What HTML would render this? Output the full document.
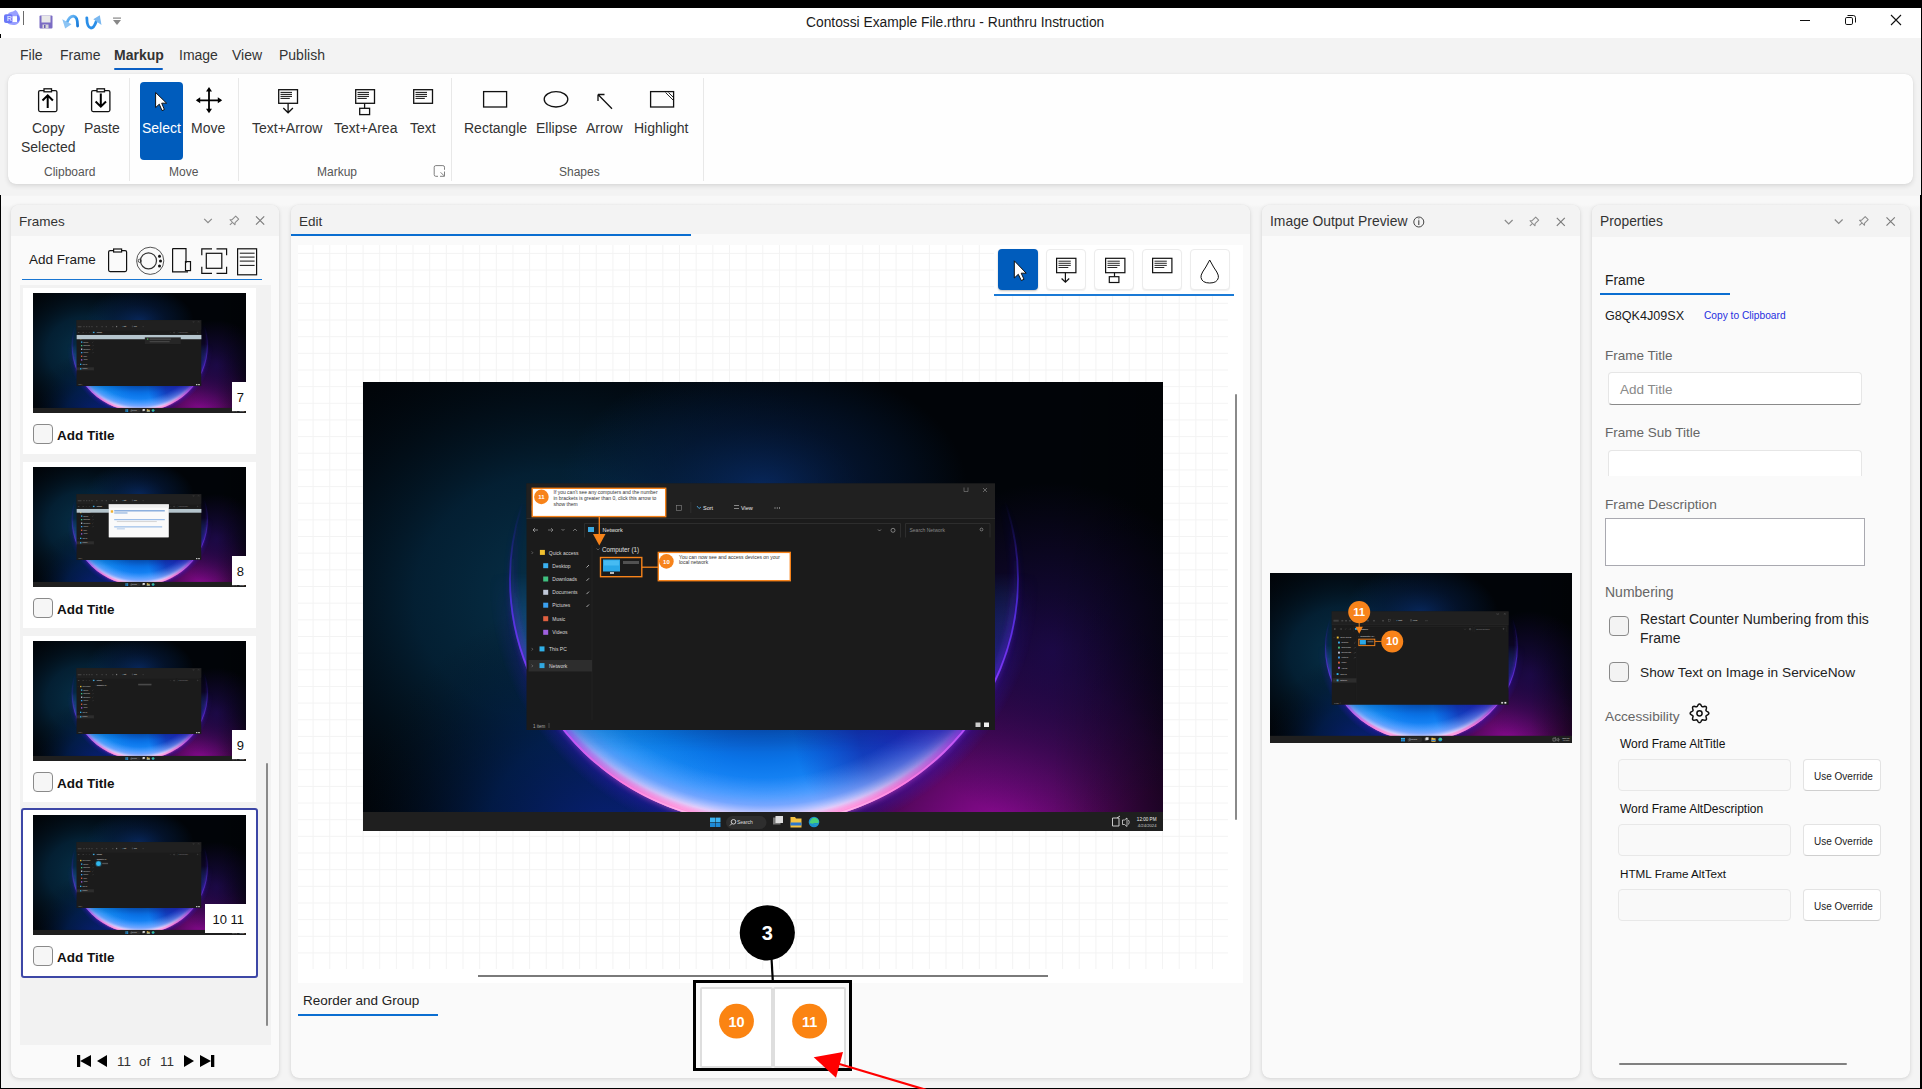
<!DOCTYPE html>
<html><head><meta charset="utf-8">
<style>
*{box-sizing:border-box;margin:0;padding:0}
html,body{width:1922px;height:1089px;overflow:hidden;background:#f3f3f3;font-family:"Liberation Sans",sans-serif;color:#1a1a1a}
.a{position:absolute}
.t{position:absolute;white-space:nowrap;line-height:1}
.panel{position:absolute;background:#fafafa;border-radius:8px;box-shadow:0 1px 4px rgba(0,0,0,.13),0 0 1px rgba(0,0,0,.1);overflow:hidden}
.ph{position:absolute;left:0;top:0;right:0;height:31px;background:#f3f3f3}
</style></head><body>
<svg width="0" height="0" style="position:absolute">
<defs>
<radialGradient id="gTeal" gradientUnits="userSpaceOnUse" cx="200" cy="215" r="330" gradientTransform="translate(200 215) scale(1 0.85) translate(-200 -215)">
  <stop offset="0" stop-color="#07324a"/><stop offset="0.45" stop-color="#04243a" stop-opacity="0.85"/><stop offset="1" stop-color="#020c16" stop-opacity="0"/></radialGradient>
 <radialGradient id="gTopBlue" gradientUnits="userSpaceOnUse" cx="400" cy="105" r="170" gradientTransform="translate(400 105) scale(1.2 0.75) translate(-400 -105)">
  <stop offset="0" stop-color="#0a3278" stop-opacity="0.7"/><stop offset="0.5" stop-color="#062250" stop-opacity="0.45"/><stop offset="1" stop-color="#052a5a" stop-opacity="0"/></radialGradient>
 <radialGradient id="gMag" gradientUnits="userSpaceOnUse" cx="630" cy="455" r="290" gradientTransform="translate(630 455) scale(1 0.9) translate(-630 -455)">
  <stop offset="0" stop-color="#900a98"/><stop offset="0.3" stop-color="#600868" stop-opacity="0.95"/><stop offset="0.65" stop-color="#2c0438" stop-opacity="0.7"/><stop offset="1" stop-color="#000" stop-opacity="0"/></radialGradient>
 <linearGradient id="gVig" gradientUnits="userSpaceOnUse" x1="690" y1="0" x2="800" y2="0">
  <stop offset="0" stop-color="#000" stop-opacity="0"/><stop offset="1" stop-color="#000" stop-opacity="0.25"/></linearGradient>
 <radialGradient id="gViolet" gradientUnits="userSpaceOnUse" cx="690" cy="270" r="170">
  <stop offset="0" stop-color="#1e0a50" stop-opacity="0.8"/><stop offset="1" stop-color="#1e0a50" stop-opacity="0"/></radialGradient>
 <radialGradient id="gNavy" gradientUnits="userSpaceOnUse" cx="250" cy="470" r="260">
  <stop offset="0" stop-color="#0a2080"/><stop offset="0.5" stop-color="#02205a" stop-opacity="0.7"/><stop offset="1" stop-color="#001020" stop-opacity="0"/></radialGradient>
 <linearGradient id="gMaskL" gradientUnits="userSpaceOnUse" x1="0" y1="190" x2="0" y2="370">
  <stop offset="0" stop-color="#fff" stop-opacity="0"/><stop offset="1" stop-color="#fff"/></linearGradient>
 <mask id="mLow" maskUnits="userSpaceOnUse" x="0" y="0" width="800" height="449"><rect width="800" height="449" fill="url(#gMaskL)"/></mask>
 <radialGradient id="gOuterGlow" gradientUnits="userSpaceOnUse" cx="401" cy="197" r="275" gradientTransform="translate(401 197) scale(1 0.967) translate(-401 -197)">
  <stop offset="0.88" stop-color="#2010b0" stop-opacity="0"/><stop offset="0.93" stop-color="#3018c0" stop-opacity="0.45"/><stop offset="1" stop-color="#3018c0" stop-opacity="0"/></radialGradient>
 <radialGradient id="gDisc" gradientUnits="userSpaceOnUse" cx="401" cy="197" r="255" fx="401" fy="40" gradientTransform="translate(401 197) scale(1 0.965) translate(-401 -197)">
  <stop offset="0" stop-color="#020a18" stop-opacity="0"/><stop offset="0.5" stop-color="#032050" stop-opacity="0.35"/><stop offset="0.7" stop-color="#0540a8"/><stop offset="0.84" stop-color="#0a74e8"/><stop offset="0.93" stop-color="#2090ff"/><stop offset="0.98" stop-color="#4a88ff"/><stop offset="1" stop-color="#6a50ff"/></radialGradient>
 <radialGradient id="gBand" gradientUnits="userSpaceOnUse" cx="401" cy="197" r="255" fx="401" fy="40" gradientTransform="translate(401 197) scale(1 0.965) translate(-401 -197)">
  <stop offset="0.88" stop-color="#80a8ff" stop-opacity="0"/><stop offset="0.95" stop-color="#90b0ff" stop-opacity="0.75"/><stop offset="0.978" stop-color="#e0d8ff"/><stop offset="0.992" stop-color="#ffc0ec"/><stop offset="1" stop-color="#ff70d0"/></radialGradient>
 <linearGradient id="gMaskB" gradientUnits="userSpaceOnUse" x1="0" y1="320" x2="0" y2="425">
  <stop offset="0" stop-color="#fff" stop-opacity="0"/><stop offset="1" stop-color="#fff"/></linearGradient>
 <mask id="mBot" maskUnits="userSpaceOnUse" x="0" y="0" width="800" height="449"><rect width="800" height="449" fill="url(#gMaskB)"/></mask>
 <radialGradient id="gDiscL" gradientUnits="userSpaceOnUse" cx="200" cy="330" r="170">
  <stop offset="0" stop-color="#0a9ad0" stop-opacity="0.35"/><stop offset="1" stop-color="#0a9ad0" stop-opacity="0"/></radialGradient>
 <radialGradient id="gDiscR" gradientUnits="userSpaceOnUse" cx="590" cy="340" r="160">
  <stop offset="0" stop-color="#1a08b0" stop-opacity="0.9"/><stop offset="0.6" stop-color="#120890" stop-opacity="0.55"/><stop offset="1" stop-color="#1010a0" stop-opacity="0"/></radialGradient>
 <linearGradient id="gRim" gradientUnits="userSpaceOnUse" x1="0" y1="120" x2="0" y2="449">
  <stop offset="0" stop-color="#2010a0" stop-opacity="0"/><stop offset="0.3" stop-color="#4020d0" stop-opacity="0.45"/><stop offset="0.65" stop-color="#8030ff" stop-opacity="0.8"/><stop offset="0.87" stop-color="#ff50c8"/><stop offset="1" stop-color="#ff90d8"/></linearGradient>
 <linearGradient id="gRim2" gradientUnits="userSpaceOnUse" x1="0" y1="120" x2="0" y2="449">
  <stop offset="0" stop-color="#3020c0" stop-opacity="0"/><stop offset="0.3" stop-color="#5a30ff" stop-opacity="0.7"/><stop offset="0.65" stop-color="#a040ff"/><stop offset="0.86" stop-color="#ff80e0"/><stop offset="1" stop-color="#ffd8f0"/></linearGradient>
 <filter id="fb3" x="-10%" y="-10%" width="120%" height="120%"><feGaussianBlur stdDeviation="3"/></filter>
<symbol id="bloom" viewBox="0 0 800 449">
 <rect width="800" height="449" fill="#010408"/>
 <rect width="800" height="449" fill="url(#gTeal)"/>
 <rect width="800" height="449" fill="url(#gMag)"/>
 <rect width="800" height="449" fill="url(#gNavy)"/>
 <rect width="800" height="449" fill="url(#gViolet)"/>
 <rect width="800" height="449" fill="url(#gVig)"/>
 <rect width="800" height="449" fill="url(#gTopBlue)"/>
 <g mask="url(#mLow)">
  <ellipse cx="401" cy="197" rx="275" ry="266" fill="url(#gOuterGlow)"/>
  <ellipse cx="401" cy="197" rx="255" ry="246" fill="url(#gDisc)"/>
  <ellipse cx="401" cy="197" rx="255" ry="246" fill="url(#gDiscL)"/>
  <ellipse cx="401" cy="197" rx="255" ry="246" fill="url(#gDiscR)"/>
  <ellipse cx="401" cy="197" rx="255" ry="246" fill="url(#gBand)" mask="url(#mBot)"/>
 </g>
 <ellipse cx="401" cy="197" rx="252" ry="243" fill="none" stroke="url(#gRim)" stroke-width="5" filter="url(#fb3)" opacity="0.8"/>
 <ellipse cx="401" cy="197" rx="254" ry="245" fill="none" stroke="url(#gRim2)" stroke-width="1.8"/>
 <rect y="430" width="800" height="19" fill="#1f1f1f"/>
 <rect x="347" y="435.6" width="5" height="4.4" fill="#3bb4f2"/><rect x="352.5" y="435.6" width="5" height="4.4" fill="#3bb4f2"/>
 <rect x="347" y="440.5" width="5" height="4.5" fill="#1e8ad6"/><rect x="352.5" y="440.5" width="5" height="4.5" fill="#1e8ad6"/>
 <rect x="363" y="434" width="40.5" height="13" rx="6.5" fill="#2e2e2e"/>
 <circle cx="370.5" cy="439.8" r="2.3" fill="none" stroke="#ddd" stroke-width="0.9"/>
 <path d="M369 441.5 L367 443.5" stroke="#ddd" stroke-width="0.9"/>
 <text x="374" y="442" font-size="5" fill="#ddd" font-family="Liberation Sans">Search</text>
 <rect x="410" y="435.5" width="7.5" height="7" fill="#777"/><rect x="412.5" y="434" width="7.5" height="7" fill="#ddd"/>
 <path d="M427.5 435 H432 L433 436.5 H438.5 V445.5 H427.5Z" fill="#f5c242"/>
 <rect x="427.5" y="440.5" width="11" height="3" fill="#2a77d0"/>
 <circle cx="451" cy="440" r="5.3" fill="#1a8fd0"/><path d="M446.5 441 Q448 435 453 436 Q456.5 437.5 455.5 441 L450 441 Q451 443.5 455 443" fill="#49d07a" stroke="none"/>
 <path d="M749.5 436 H756 V444 H749.5Z M754 436 L757 434" fill="none" stroke="#ddd" stroke-width="0.9"/>
 <path d="M759.5 438 H761.5 L764 436 V444.5 L761.5 442.5 H759.5Z M765.5 438 Q767 440 765.5 442.5" fill="none" stroke="#ddd" stroke-width="0.8"/>
 <text x="793.5" y="439" font-size="4.6" fill="#eee" text-anchor="end" font-family="Liberation Sans">12:00 PM</text>
 <text x="793.5" y="444.5" font-size="4.2" fill="#ccc" text-anchor="end" font-family="Liberation Sans">4/24/2024</text>
</symbol>
<symbol id="explorer" viewBox="0 0 800 449"><g font-family="Liberation Sans">
<rect x="163.5" y="101.5" width="468.5" height="246.5" fill="#1b1b1b"/>
<rect x="163.5" y="101.5" width="468.5" height="35" fill="#202020"/>
<rect x="163.5" y="136" width="468.5" height="0.8" fill="#333"/>
<path d="M601 105.5 V109.5 H605 V105.5" fill="none" stroke="#999" stroke-width="0.5"/>
<path d="M620 106 L624 110 M624 106 L620 110" stroke="#aaa" stroke-width="0.5"/>
<rect x="168" y="123.5" width="14" height="5" fill="#777" opacity="0.35"/>
<rect x="189" y="124" width="5" height="4" fill="#888" opacity="0.35"/>
<rect x="199" y="124" width="5" height="4" fill="#888" opacity="0.35"/>
<rect x="209" y="124" width="5" height="4" fill="#888" opacity="0.35"/>
<rect x="219" y="124" width="5" height="4" fill="#888" opacity="0.35"/>
<rect x="237" y="124" width="5" height="4" fill="#888" opacity="0.35"/>
<rect x="257" y="124" width="5" height="4" fill="#888" opacity="0.35"/>
<rect x="273" y="124" width="5" height="4" fill="#888" opacity="0.35"/>
<rect x="297" y="124" width="5" height="4" fill="#888" opacity="0.35"/>
<rect x="313.5" y="123.5" width="5" height="5" fill="none" stroke="#888" stroke-width="0.6"/>
<path d="M327.8 120 V131" stroke="#3a3a3a" stroke-width="0.6"/>
<path d="M334 124 L336 126.5 L338 125" stroke="#4ab0ee" stroke-width="0.8" fill="none"/>
<text x="340" y="128" font-size="5.5" fill="#e8e8e8" text-anchor="start" font-weight="normal">Sort</text>
<path d="M371 123.5 H376 M371 126.5 H376" stroke="#ccc" stroke-width="0.6"/>
<text x="378" y="128" font-size="5.5" fill="#e8e8e8" text-anchor="start" font-weight="normal">View</text>
<path d="M411.5 126 H412.5 M413.8 126 H414.8 M416 126 H417" stroke="#ddd" stroke-width="0.9"/>
<path d="M221.5 155.5 V141.5 H537.5 V155.5" fill="none" stroke="#3a3a3a" stroke-width="0.6"/>
<path d="M542.5 155.5 V141.5 H627 V155.5" fill="none" stroke="#3a3a3a" stroke-width="0.6"/>
<path d="M170 148 H175 M170 148 L172 146 M170 148 L172 150" stroke="#ccc" stroke-width="0.6" fill="none"/>
<path d="M185 148 H190 M190 148 L188 146 M190 148 L188 150" stroke="#aaa" stroke-width="0.6" fill="none"/>
<path d="M198.5 147 L200 148.5 L201.5 147 M210 149 L212 147 L214 149" stroke="#aaa" stroke-width="0.6" fill="none"/>
<rect x="225" y="145" width="6" height="5" fill="#3aa8e0"/>
<text x="239.5" y="150" font-size="5.5" fill="#e8e8e8" text-anchor="start" font-weight="normal">Network</text>
<path d="M515 147.5 L516.5 149 L518 147.5" stroke="#aaa" stroke-width="0.6" fill="none"/>
<circle cx="530" cy="148.3" r="2" fill="none" stroke="#bbb" stroke-width="0.6"/>
<text x="546.5" y="150" font-size="5" fill="#888" text-anchor="start" font-weight="normal">Search Network</text>
<circle cx="618.5" cy="147.5" r="1.4" fill="none" stroke="#aaa" stroke-width="0.6"/>
<path d="M229 163 V338" stroke="#262626" stroke-width="0.7"/>
<rect x="165.5" y="278" width="63.5" height="11.5" fill="#2d2d2d"/>
<rect x="176.9" y="167.89999999999998" width="5" height="5" fill="#f0c030"/>
<text x="185.8" y="172.5" font-size="5" fill="#d8d8d8" text-anchor="start" font-weight="normal">Quick access</text>
<path d="M168.6 169.39999999999998 L169.8 170.7 L168.6 172.0" stroke="#999" stroke-width="0.5" fill="none"/>
<rect x="180.2" y="181.2" width="5" height="5" fill="#3ab0f0"/>
<text x="189.3" y="185.8" font-size="5" fill="#d8d8d8" text-anchor="start" font-weight="normal">Desktop</text>
<rect x="180.2" y="194.5" width="5" height="5" fill="#40c080"/>
<text x="189.3" y="199.10000000000002" font-size="5" fill="#d8d8d8" text-anchor="start" font-weight="normal">Downloads</text>
<rect x="180.2" y="207.79999999999998" width="5" height="5" fill="#c0c8d8"/>
<text x="189.3" y="212.4" font-size="5" fill="#d8d8d8" text-anchor="start" font-weight="normal">Documents</text>
<rect x="180.2" y="220.7" width="5" height="5" fill="#3aa0f0"/>
<text x="189.3" y="225.3" font-size="5" fill="#d8d8d8" text-anchor="start" font-weight="normal">Pictures</text>
<rect x="180.2" y="234.2" width="5" height="5" fill="#e06040"/>
<text x="189.3" y="238.8" font-size="5" fill="#d8d8d8" text-anchor="start" font-weight="normal">Music</text>
<rect x="180.2" y="247.79999999999998" width="5" height="5" fill="#a060e0"/>
<text x="189.3" y="252.4" font-size="5" fill="#d8d8d8" text-anchor="start" font-weight="normal">Videos</text>
<rect x="176.5" y="264.4" width="5" height="5" fill="#30b0e8"/>
<text x="186" y="269.0" font-size="5" fill="#d8d8d8" text-anchor="start" font-weight="normal">This PC</text>
<path d="M168.6 265.9 L169.8 267.2 L168.6 268.5" stroke="#999" stroke-width="0.5" fill="none"/>
<rect x="176.5" y="281.09999999999997" width="5" height="5" fill="#30a8e0"/>
<text x="186" y="285.7" font-size="5" fill="#d8d8d8" text-anchor="start" font-weight="normal">Network</text>
<path d="M168.6 282.59999999999997 L169.8 283.9 L168.6 285.2" stroke="#999" stroke-width="0.5" fill="none"/>
<path d="M223.5 185.5 L226 183" stroke="#bbb" stroke-width="0.9"/>
<path d="M223.5 198.8 L226 196.3" stroke="#bbb" stroke-width="0.9"/>
<path d="M223.5 212.1 L226 209.6" stroke="#bbb" stroke-width="0.9"/>
<path d="M223.5 225.0 L226 222.5" stroke="#bbb" stroke-width="0.9"/>
<path d="M233.5 166.5 L235 168 L236.5 166.5" stroke="#999" stroke-width="0.5" fill="none"/>
<text x="239" y="170" font-size="6.3" fill="#e0e0e0" text-anchor="start" font-weight="normal">Computer (1)</text>
<text x="170" y="345.5" font-size="4.5" fill="#aaa" text-anchor="start" font-weight="normal">1 item</text>
<path d="M186 341 V346" stroke="#777" stroke-width="0.5"/>
<rect x="612.5" y="340.5" width="5" height="4.5" fill="#ccc"/><rect x="621" y="340.5" width="5" height="4.5" fill="#eee"/>
</g></symbol>
<symbol id="wp0" viewBox="0 0 800 449"><use href="#bloom"/><use href="#explorer"/><rect x="164" y="157" width="468.5" height="16" fill="#b4c4cc"/>
<rect x="420" y="166" width="135" height="25" fill="#262626"/>
<rect x="428" y="170" width="5" height="5" fill="#50b050"/>
<rect x="438" y="171" width="80" height="3" fill="#888" opacity="0.6"/>
<rect x="438" y="181" width="75" height="3" fill="#888" opacity="0.5"/></symbol>
<symbol id="wp1" viewBox="0 0 800 449"><use href="#bloom"/><use href="#explorer"/><rect x="164" y="157" width="468.5" height="14" fill="#b4c4cc"/>
<rect x="285" y="140" width="225" height="123" fill="#fafafa" stroke="#ccc" stroke-width="1"/>
<rect x="285" y="140" width="225" height="12" fill="#eee"/>
<rect x="292" y="162" width="9" height="9" fill="#f0b030"/>
<rect x="305" y="162" width="190" height="4" fill="#3a78c8" opacity="0.8"/>
<rect x="305" y="170" width="50" height="4" fill="#3a78c8" opacity="0.6"/>
<rect x="305" y="195" width="190" height="4" fill="#4a88d8" opacity="0.6"/>
<rect x="315" y="203" width="150" height="3" fill="#888" opacity="0.4"/>
<rect x="305" y="222" width="180" height="4" fill="#4a88d8" opacity="0.6"/>
<rect x="315" y="230" width="30" height="3" fill="#4a88d8" opacity="0.5"/></symbol>
<symbol id="wp2" viewBox="0 0 800 449"><use href="#bloom"/><use href="#explorer"/><rect x="395" y="160" width="50" height="6" fill="#777" opacity="0.5"/></symbol>
<symbol id="wp3" viewBox="0 0 800 449"><use href="#bloom"/><use href="#explorer"/><circle cx="246" cy="182" r="9" fill="#30b8f0"/><circle cx="246" cy="182" r="12" fill="#30b8f0" opacity="0.3"/>
<rect x="260" y="179" width="22" height="5" fill="#888" opacity="0.5"/></symbol>
<symbol id="wpp" viewBox="0 0 800 449"><use href="#bloom"/><use href="#explorer"/><rect x="238" y="177" width="16" height="12" fill="#2aa8e8"/><rect x="258" y="179" width="16" height="4" fill="#777" opacity="0.7"/>
<rect x="235.3" y="174.8" width="42.3" height="17" fill="none" stroke="#f7831a" stroke-width="2.5"/>
<path d="M277.6 180.7 H296" stroke="#f7831a" stroke-width="2.5"/>
<path d="M236.3 130 V146" stroke="#f7831a" stroke-width="2.5"/>
<path d="M226.6 141.7 H246 L236.3 160.3Z" fill="#f7831a"/>
<circle cx="236.3" cy="103.3" r="29.1" fill="#f7831a"/>
<text x="236.3" y="114" text-anchor="middle" font-family="Liberation Sans" font-weight="bold" font-size="30" fill="#fff">11</text>
<circle cx="323.8" cy="180.7" r="29.1" fill="#f7831a"/>
<text x="323.8" y="191.4" text-anchor="middle" font-family="Liberation Sans" font-weight="bold" font-size="30" fill="#fff">10</text></symbol>
<symbol id="wpm" viewBox="0 0 800 449"><use href="#bloom"/><use href="#explorer"/><g font-family="Liberation Sans">
<rect x="240" y="177.5" width="17" height="12" fill="#2aa8e8"/>
<rect x="241" y="178.5" width="15" height="5" fill="#5cc8f8" opacity="0.6"/>
<rect x="247" y="190" width="4" height="2" fill="#bbb"/>
<rect x="260" y="179" width="16" height="3" fill="#777" opacity="0.6"/>
<rect x="237.5" y="175.5" width="41.3" height="19.2" fill="none" stroke="#f7831a" stroke-width="1.4"/>
<path d="M278.8 185.2 H295.5" stroke="#f7831a" stroke-width="1.3"/>
<rect x="295.3" y="170.4" width="132" height="28.3" fill="#fff" stroke="#f7831a" stroke-width="1.4"/>
<circle cx="303.4" cy="179.4" r="7.3" fill="#f7831a"/>
<text x="303.4" y="181.6" font-size="6" fill="#fff" text-anchor="middle" font-weight="bold">10</text>
<text x="316" y="177" font-size="5" fill="#333" text-anchor="start" font-weight="normal">You can now see and access devices on your</text>
<text x="316" y="182.2" font-size="5" fill="#333" text-anchor="start" font-weight="normal">local network</text>
<rect x="169.2" y="106.3" width="133.5" height="28.3" fill="#fff" stroke="#f7831a" stroke-width="1.4"/>
<circle cx="178.4" cy="114.9" r="7.3" fill="#f7831a"/>
<text x="178.4" y="117.1" font-size="6" fill="#fff" text-anchor="middle" font-weight="bold">11</text>
<text x="190.5" y="112.2" font-size="5" fill="#333" text-anchor="start" font-weight="normal">If you can't see any computers and the number</text>
<text x="190.5" y="118.3" font-size="5" fill="#333" text-anchor="start" font-weight="normal">in brackets is greater than 0, click this arrow to</text>
<text x="190.5" y="124.4" font-size="5" fill="#333" text-anchor="start" font-weight="normal">show them</text>
<path d="M236.3 134.8 V153" stroke="#f7831a" stroke-width="1.3"/>
<path d="M230 152 H242.5 L236.3 163.4Z" fill="#f7831a"/>
</g></symbol>
</defs></svg>
<div class="a" style="left:0;top:195px;width:1922px;height:894px;background:#f4f4f4"></div>
<div class="a" style="left:0;top:195.5px;width:1922px;height:12px;background:linear-gradient(#f8f8f8,#f8f8f8 70%,#f4f4f4)"></div>
<!-- top black bar -->
<div class="a" style="left:0;top:0;width:1922px;height:8px;background:#000"></div>
<!-- title bar -->
<div class="a" style="left:0;top:8px;width:1922px;height:30px;background:#fff"></div>
<!-- borders -->
<div class="a" style="left:0;top:195px;width:1px;height:894px;background:#000"></div>
<div class="a" style="left:0;top:1088px;width:1922px;height:1px;background:#000"></div>
<div class="a" style="left:1921px;top:0;width:1px;height:1089px;background:#000"></div>
<div class="a" style="left:1920px;top:195px;width:1px;height:894px;background:#000"></div>

<div id="title">
<svg class="a" style="left:0;top:8px" width="24" height="22" viewBox="0 8 24 22">
 <path d="M8.5 13 Q11 11.6 13 11.4 L15.6 10.1 Q17.6 11.5 18.6 14.2 Q20.2 16 20 19 Q19.6 23 16.5 24.5 Q13.3 25.6 10 24.6 Q8 23.8 7 22.5 Z" fill="#99a0ff"/>
 <path d="M17 14.6 Q19.8 16 19.9 19 Q19.8 21.5 17.3 22.3 Z" fill="#6b78f7"/>
 <rect x="4" y="14.2" width="8.6" height="8.7" rx="2" fill="#6b78f7"/>
 <rect x="12.5" y="16.2" width="4.5" height="5.8" fill="#fff"/>
 <text x="6.7" y="21.2" font-size="7" fill="#d5daff" font-family="Liberation Sans" font-weight="bold">R</text>
</svg>
<div class="a" style="left:0;top:34px;width:1px;height:4px;background:#000"></div>
<div class="a" style="left:23px;top:11px;width:1px;height:14px;background:#6a6a6a"></div>
<svg class="a" style="left:39px;top:15px" width="14" height="14" viewBox="0 0 14 14">
 <rect x="0.5" y="0.5" width="13" height="13" rx="1" fill="#7b6cc4"/>
 <rect x="2.5" y="0.5" width="9" height="7" fill="#e8e8e8"/>
 <rect x="3.5" y="9.5" width="6" height="4" fill="#d8d8d8"/>
 <rect x="5" y="10" width="1.5" height="3" fill="#6b5cb4"/>
</svg>
<svg class="a" style="left:58px;top:12px" width="50" height="20" viewBox="58 12 50 20">
 <defs><linearGradient id="gU" x1="0" y1="0" x2="1" y2="1"><stop offset="0" stop-color="#8cc8f8"/><stop offset="0.6" stop-color="#2a90e8"/><stop offset="1" stop-color="#1a7ad8"/></linearGradient></defs>
 <path d="M66.5 23.5 Q69.5 15.8 73.5 16.2 Q77.8 16.8 77.6 26" fill="none" stroke="url(#gU)" stroke-width="2.8" stroke-linecap="round"/>
 <path d="M62.3 19.3 L65.2 28.4 L71.5 24.2 Z" fill="#8cc4f4"/>
 <path d="M86.8 17.8 Q87 27.8 91 28 Q94 28 96.2 21.5" fill="none" stroke="#2a8ee8" stroke-width="2.8" stroke-linecap="round"/>
 <path d="M99.8 15.2 L93.3 19.2 L101.5 25 Z" fill="#7ab8f0"/>
</svg>
<svg class="a" style="left:112px;top:17px" width="10" height="9" viewBox="0 0 10 9">
 <rect x="1" y="0.5" width="8" height="1.2" fill="#888"/>
 <path d="M1 3 L9 3 L5 8Z" fill="#888"/>
</svg>
<div class="t" style="left:806px;top:16px;font-size:13.8px;color:#1a1a1a">Contossi Example File.rthru - Runthru Instruction</div>
<div class="a" style="left:1800px;top:20px;width:10px;height:1px;background:#111"></div>
<svg class="a" style="left:1840px;top:10px" width="20" height="20" viewBox="1840 10 20 20">
 <rect x="1845.5" y="17.5" width="7" height="7" rx="1.3" fill="none" stroke="#111" stroke-width="1"/>
 <path d="M1847.5 15.5 H1853.3 Q1855.5 15.5 1855.5 17.7 V22.5" fill="none" stroke="#111" stroke-width="1"/>
</svg>
<svg class="a" style="left:1890px;top:14px" width="12" height="12" viewBox="0 0 12 12">
 <path d="M1 1 L11 11 M11 1 L1 11" stroke="#111" stroke-width="1.1"/>
</svg>
</div>
<div id="menu">
<div class="t" style="left:20px;top:48px;font-size:14px;color:#333">File</div>
<div class="t" style="left:60px;top:48px;font-size:14px;color:#333">Frame</div>
<div class="t" style="left:114px;top:48px;font-size:14px;font-weight:bold;color:#333">Markup</div>
<div class="a" style="left:114px;top:68px;width:49px;height:2px;border-radius:1px;background:#0a5fc4"></div>
<div class="t" style="left:179px;top:48px;font-size:14px;color:#333">Image</div>
<div class="t" style="left:232px;top:48px;font-size:14px;color:#333">View</div>
<div class="t" style="left:279px;top:48px;font-size:14px;color:#333">Publish</div>
</div>
<div id="ribbon">
<div class="a" style="left:8px;top:74px;width:1905px;height:110px;background:#fefefe;border-radius:8px;box-shadow:0 2px 5px rgba(0,0,0,.11),0 0 1px rgba(0,0,0,.12)"></div>
<div class="a" style="left:129px;top:78px;width:1px;height:103px;background:#e8e8e8"></div>
<div class="a" style="left:238px;top:78px;width:1px;height:103px;background:#e8e8e8"></div>
<div class="a" style="left:451px;top:78px;width:1px;height:103px;background:#e8e8e8"></div>
<div class="a" style="left:703px;top:78px;width:1px;height:103px;background:#e8e8e8"></div>
<div class="a" style="left:140px;top:82px;width:43px;height:78px;background:#005cbc;border-radius:4px"></div>
<svg class="a" style="left:0;top:80px" width="710" height="104" viewBox="0 80 710 104">
 <g fill="none" stroke="#111" stroke-width="1.3">
  <rect x="38.6" y="90.6" width="18.3" height="21" rx="1.5"/>
  <rect x="44" y="88.8" width="7.5" height="3" fill="#fff"/>
  <rect x="91.6" y="90.6" width="18.3" height="21" rx="1.5"/>
  <rect x="97" y="88.8" width="7.5" height="3" fill="#fff"/>
 </g>
 <g stroke="#000" stroke-width="2" fill="none">
  <path d="M47.7 108 V96.5 M42.5 100.5 L47.7 95.3 L52.9 100.5"/>
  <path d="M100.8 93.5 V106 M95.6 101.5 L100.8 106.7 L106 101.5"/>
 </g>
 <path d="M155.6 92.5 L155.6 107.6 L159.3 104.2 L162 110.6 L164.4 109.6 L161.7 103.2 L166.6 103.2 Z" fill="#fff" stroke="#111" stroke-width="1"/>
 <g stroke="#000" stroke-width="1.8" fill="#000">
  <path d="M209 89.5 V111 M197.5 100.3 H220.5" fill="none"/>
  <path d="M209 87 L206 91.5 H212Z M209 113.3 L206 108.8 H212Z M195.8 100.3 L200.2 97.3 V103.3Z M222.2 100.3 L217.8 97.3 V103.3Z" stroke="none"/>
 </g>
 <g fill="none" stroke="#111" stroke-width="1.3">
  <rect x="278.7" y="89.7" width="18.8" height="13.6"/>
  <path d="M280.5 92.4 H292 M280.5 94.4 H292 M280.5 96.4 H292 M280.5 98.4 H289.8" stroke-width="1"/>
  <path d="M288.1 103.3 V112.8 M283.3 108 L288.1 112.8 L292.9 108"/>
  <rect x="355.7" y="89.7" width="18.8" height="13.6"/>
  <path d="M357.5 92.4 H369 M357.5 94.4 H369 M357.5 96.4 H369 M357.5 98.4 H366.8" stroke-width="1"/>
  <path d="M364.6 103.3 V108.3"/>
  <rect x="359.7" y="108.3" width="9.9" height="6.3"/>
  <rect x="413.7" y="89.7" width="18.8" height="13.6"/>
  <path d="M415.5 92.4 H427 M415.5 94.4 H427 M415.5 96.4 H427 M415.5 98.4 H424.8" stroke-width="1"/>
  <path d="M438 176.3 H435.8 Q434.2 176.3 434.2 174.7 V167.2 Q434.2 165.6 435.8 165.6 H442.9 Q444.5 165.6 444.5 167.2 V169.8 M444.5 171.5 V176.3 H440 M440.6 172.3 L444.2 175.9" stroke="#808080" stroke-width="1" fill="none"/>
  <rect x="483.6" y="91.6" width="23" height="15.4"/>
  <ellipse cx="556" cy="99.3" rx="11.8" ry="7.7"/>
  <path d="M598 94.5 L612 108.7 M598 94.5 V101 M598 94.5 H604.5"/>
  <rect x="650.6" y="91.6" width="23" height="15.4"/>
  <path d="M665.5 92.5 L673 100 M668.5 92.5 L673 97" stroke-width="0.9"/>
 </g>
</svg>
<div class="t" style="left:32px;top:121px;font-size:14px;color:#333">Copy</div>
<div class="t" style="left:21px;top:140px;font-size:14px;color:#333">Selected</div>
<div class="t" style="left:84px;top:121px;font-size:14px;color:#333">Paste</div>
<div class="t" style="left:142px;top:121px;font-size:14px;color:#fff">Select</div>
<div class="t" style="left:191px;top:121px;font-size:14px;color:#333">Move</div>
<div class="t" style="left:252px;top:121px;font-size:14px;color:#333">Text+Arrow</div>
<div class="t" style="left:334px;top:121px;font-size:14px;color:#333">Text+Area</div>
<div class="t" style="left:410px;top:121px;font-size:14px;color:#333">Text</div>
<div class="t" style="left:464px;top:121px;font-size:14px;color:#333">Rectangle</div>
<div class="t" style="left:536px;top:121px;font-size:14px;color:#333">Ellipse</div>
<div class="t" style="left:586px;top:121px;font-size:14px;color:#333">Arrow</div>
<div class="t" style="left:634px;top:121px;font-size:14px;color:#333">Highlight</div>
<div class="t" style="left:44px;top:166px;font-size:12px;color:#555">Clipboard</div>
<div class="t" style="left:169px;top:166px;font-size:12px;color:#555">Move</div>
<div class="t" style="left:317px;top:166px;font-size:12px;color:#555">Markup</div>
<div class="t" style="left:559px;top:166px;font-size:12px;color:#555">Shapes</div>
</div>
<div id="frames">
<div class="panel" style="left:11px;top:205px;width:268px;height:873px">
 <div class="ph"></div>
</div>
<div class="t" style="left:19px;top:215px;font-size:13.5px;color:#333">Frames</div>
<svg class="a" style="left:200px;top:212px" width="70" height="16" viewBox="200 212 70 16">
 <path d="M204.2 218.9 L208 222.7 L211.8 218.9" fill="none" stroke="#8a8a8a" stroke-width="1.2"/>
 <g transform="translate(233.8 221) rotate(45) scale(0.92)" fill="none" stroke="#8a8a8a" stroke-width="1.1" stroke-linejoin="round"><path d="M-2.3 -5.2 H2.3 V0.3 L3.9 2 H-3.9 L-2.3 0.3 Z"/><path d="M0 2 V6"/></g>
 <path d="M256 216.3 L264.2 224.6 M264.2 216.3 L256 224.6" stroke="#7a7a7a" stroke-width="1.15"/>
</svg>
<div class="t" style="left:29px;top:253px;font-size:13.5px;color:#1a1a1a">Add Frame</div>
<svg class="a" style="left:100px;top:244px" width="170" height="36" viewBox="100 244 170 36">
 <g fill="none" stroke="#111" stroke-width="1.2">
  <rect x="108.6" y="250.6" width="18" height="21" rx="1.5"/>
  <rect x="113.6" y="249" width="8" height="3" fill="#fff"/>
  <circle cx="150.2" cy="260.8" r="13.6" stroke="#555" stroke-width="1"/>
  <circle cx="148.5" cy="260.8" r="8" stroke="#333"/>
  <circle cx="139.7" cy="260.8" r="1.6" stroke="#333" stroke-width="0.9"/>
  <circle cx="159.5" cy="256.3" r="1.5" fill="#111" stroke="none"/>
  <circle cx="160.5" cy="261" r="1.5" fill="#111" stroke="none"/>
  <circle cx="159.5" cy="266" r="1.5" fill="#111" stroke="none"/>
  <path d="M172.6 248.6 H186 V263 M188 271.8 H172.6 V248.6"/>
  <rect x="185.5" y="261.6" width="5" height="9"/>
  <path d="M201.8 255.2 V248.8 H212 M216.5 248.8 H226.6 V255.2 M226.6 266.8 V273.4 H216.5 M212 273.4 H201.8 V266.8"/>
  <rect x="206.3" y="253.3" width="15.5" height="15"/>
  <rect x="237.6" y="248.8" width="19" height="26"/>
  <path d="M239.8 253.2 H254.6 M239.8 257.1 H254.6 M239.8 261.1 H254.6 M239.8 265.4 H254.6" stroke-width="1"/>
 </g>
</svg>
<div class="a" style="left:22px;top:278.5px;width:240px;height:1.5px;background:#1976d2"></div>
<div class="a" style="left:20px;top:285px;width:251px;height:760px;background:#f2f2f2"></div>
<div class="a" style="left:23px;top:288px;width:233px;height:166px;background:#fff"></div>
<svg class="a" style="left:33px;top:293px" width="213" height="120" viewBox="0 0 800 449" preserveAspectRatio="none"><use href="#wp0"/></svg>
<div class="a" style="left:232px;top:382px;width:14px;height:29px;background:#fff"></div>
<div class="t" style="left:232px;top:391px;width:12px;text-align:right;font-size:13px;color:#111">7</div>
<div class="a" style="left:33px;top:424px;width:20px;height:20px;border:1px solid #8a8a8a;border-radius:4px;background:#f6f6f6"></div>
<div class="t" style="left:57px;top:429px;font-size:13.5px;font-weight:bold;color:#111">Add Title</div>
<div class="a" style="left:23px;top:462px;width:233px;height:166px;background:#fff"></div>
<svg class="a" style="left:33px;top:467px" width="213" height="120" viewBox="0 0 800 449" preserveAspectRatio="none"><use href="#wp1"/></svg>
<div class="a" style="left:232px;top:556px;width:14px;height:29px;background:#fff"></div>
<div class="t" style="left:232px;top:565px;width:12px;text-align:right;font-size:13px;color:#111">8</div>
<div class="a" style="left:33px;top:598px;width:20px;height:20px;border:1px solid #8a8a8a;border-radius:4px;background:#f6f6f6"></div>
<div class="t" style="left:57px;top:603px;font-size:13.5px;font-weight:bold;color:#111">Add Title</div>
<div class="a" style="left:23px;top:636px;width:233px;height:166px;background:#fff"></div>
<svg class="a" style="left:33px;top:641px" width="213" height="120" viewBox="0 0 800 449" preserveAspectRatio="none"><use href="#wp2"/></svg>
<div class="a" style="left:232px;top:730px;width:14px;height:29px;background:#fff"></div>
<div class="t" style="left:232px;top:739px;width:12px;text-align:right;font-size:13px;color:#111">9</div>
<div class="a" style="left:33px;top:772px;width:20px;height:20px;border:1px solid #8a8a8a;border-radius:4px;background:#f6f6f6"></div>
<div class="t" style="left:57px;top:777px;font-size:13.5px;font-weight:bold;color:#111">Add Title</div>
<div class="a" style="left:23px;top:810px;width:233px;height:166px;background:#fff"></div>
<div class="a" style="left:21px;top:808px;width:237px;height:170px;border:2px solid #3d47a6;border-radius:3px"></div>
<svg class="a" style="left:33px;top:815px" width="213" height="120" viewBox="0 0 800 449" preserveAspectRatio="none"><use href="#wp3"/></svg>
<div class="a" style="left:205px;top:904px;width:41px;height:29px;background:#fff"></div>
<div class="t" style="left:205px;top:913px;width:39px;text-align:right;font-size:13px;color:#111">10 11</div>
<div class="a" style="left:33px;top:946px;width:20px;height:20px;border:1px solid #8a8a8a;border-radius:4px;background:#f6f6f6"></div>
<div class="t" style="left:57px;top:951px;font-size:13.5px;font-weight:bold;color:#111">Add Title</div>

<div class="a" style="left:266px;top:763px;width:2px;height:263px;background:#8a8a8a;border-radius:1px"></div>
<svg class="a" style="left:70px;top:1050px" width="150" height="22" viewBox="70 1050 150 22">
 <path d="M77 1055 H80.2 V1067 H77Z M80.2 1061 L91 1055 V1067Z M97 1061 L107 1055 V1067Z M184 1055 L194 1061 L184 1067Z M200 1055 L211 1061 L200 1067Z M211 1055 H214.3 V1067 H211Z" fill="#000"/>
</svg>
<div class="t" style="left:117px;top:1055px;font-size:13.5px;color:#333">11</div>
<div class="t" style="left:139px;top:1055px;font-size:13.5px;color:#333">of</div>
<div class="t" style="left:160px;top:1055px;font-size:13.5px;color:#333">11</div>
</div>
<div id="edit">
<div class="panel" style="left:291px;top:205px;width:959px;height:873px"><div class="ph" style="height:29px"></div></div>
<div class="t" style="left:299px;top:215px;font-size:13.5px;color:#333">Edit</div>
<div class="a" style="left:291px;top:234px;width:400px;height:2px;background:#0a6ed1"></div>
<div class="a" style="left:298px;top:245px;width:945px;height:738px;background:#fff"></div>
<div class="a" style="left:298px;top:245px;width:930px;height:724px;background-image:linear-gradient(to right,#f3f3f3 1px,transparent 1px),linear-gradient(to bottom,#f3f3f3 1px,transparent 1px);background-size:16.6667px 16.6667px;background-position:14.6px 7.9px"></div>
<!-- toolbar -->
<div class="a" style="left:994px;top:245px;width:249px;height:49px;background:#fff"></div>
<div class="a" style="left:998px;top:249px;width:40px;height:41px;background:#005cbc;border-radius:4px;box-shadow:0 1px 2px rgba(0,0,0,.25)"></div>
<div class="a" style="left:1046px;top:249px;width:40px;height:41px;background:#fff;border:1px solid #ececec;border-radius:4px;box-shadow:0 1px 1px rgba(0,0,0,.06)"></div>
<div class="a" style="left:1094px;top:249px;width:40px;height:41px;background:#fff;border:1px solid #ececec;border-radius:4px;box-shadow:0 1px 1px rgba(0,0,0,.06)"></div>
<div class="a" style="left:1142px;top:249px;width:40px;height:41px;background:#fff;border:1px solid #ececec;border-radius:4px;box-shadow:0 1px 1px rgba(0,0,0,.06)"></div>
<div class="a" style="left:1190px;top:249px;width:40px;height:41px;background:#fff;border:1px solid #ececec;border-radius:4px;box-shadow:0 1px 1px rgba(0,0,0,.06)"></div>
<div class="a" style="left:994px;top:294px;width:240px;height:1.5px;background:#1a7ad6"></div>
<svg class="a" style="left:990px;top:244px" width="250" height="50" viewBox="990 244 250 50">
 <path d="M1014.3 260.8 L1014.3 278 L1018.3 274.3 L1021.3 280.5 L1024 279.3 L1021.2 273.2 L1026.2 273.2 Z" fill="#fff" stroke="#111" stroke-width="1"/>
 <g fill="none" stroke="#111" stroke-width="1.2">
  <rect x="1056.6" y="258.3" width="19.3" height="14.4"/>
  <path d="M1058.5 261.2 H1070.8 M1058.5 263.3 H1070.8 M1058.5 265.4 H1070.8 M1058.5 267.5 H1068.3" stroke-width="0.9"/>
  <path d="M1065.4 272.7 V282 M1061.6 278.5 L1065.4 282.2 L1069.2 278.5"/>
  <rect x="1105.6" y="258.3" width="19.3" height="14.4"/>
  <path d="M1107.5 261.2 H1119.8 M1107.5 263.3 H1119.8 M1107.5 265.4 H1119.8 M1107.5 267.5 H1117.3" stroke-width="0.9"/>
  <path d="M1114.5 272.7 V276.7"/>
  <rect x="1109.3" y="276.7" width="9.6" height="5.8"/>
  <rect x="1152.6" y="258.3" width="19.3" height="14.4"/>
  <path d="M1154.5 261.2 H1166.8 M1154.5 263.3 H1166.8 M1154.5 265.4 H1166.8 M1154.5 267.5 H1164.3" stroke-width="0.9"/>
  <path d="M1209.7 260 Q1205.5 268 1202.6 272 Q1200.6 275.5 1201 277.5 Q1202 283 1209.7 283 Q1217.4 283 1218.4 277.5 Q1218.8 275.5 1216.8 272 Q1213.9 268 1209.7 260Z" stroke-width="1"/>
 </g>
</svg>
<!-- main image -->
<svg class="a" style="left:363px;top:382px" width="800" height="449" viewBox="0 0 800 449" preserveAspectRatio="none"><use href="#wpm"/></svg>
<div class="a" style="left:1235px;top:394px;width:2px;height:426px;background:#8a8a8a;border-radius:1px"></div>
<div class="a" style="left:478px;top:975px;width:570px;height:2px;background:#7a7a7a"></div>
<!-- reorder -->
<div class="t" style="left:303px;top:994px;font-size:13.5px;color:#222">Reorder and Group</div>
<div class="a" style="left:298px;top:1014px;width:140px;height:2px;background:#0a6ed1"></div>
<div class="a" style="left:693px;top:980px;width:159px;height:91px;border:3px solid #000;background:#fafafa"></div>
<div class="a" style="left:700px;top:987px;width:73px;height:81px;border:2px solid #dedede;border-radius:2px;background:#fff"></div>
<div class="a" style="left:773px;top:987px;width:73px;height:81px;border:2px solid #dedede;border-radius:2px;background:#fff"></div>
<svg class="a" style="left:680px;top:895px" width="260" height="194" viewBox="680 895 260 194">
 <path d="M771.5 958 L772.8 981" stroke="#000" stroke-width="2.2"/>
 <circle cx="767.3" cy="932.8" r="27.6" fill="#000"/>
 <text x="767.3" y="940" text-anchor="middle" font-family="Liberation Sans" font-weight="bold" font-size="20" fill="#fff">3</text>
 <circle cx="736.5" cy="1021.2" r="17.4" fill="#fb8412"/>
 <text x="736.5" y="1026.5" text-anchor="middle" font-family="Liberation Sans" font-weight="bold" font-size="14.5" fill="#fff">10</text>
 <circle cx="809.6" cy="1021.2" r="17.4" fill="#fb8412"/>
 <text x="809.6" y="1026.5" text-anchor="middle" font-family="Liberation Sans" font-weight="bold" font-size="14.5" fill="#fff">11</text>
 <path d="M836 1063 L926 1089.8" stroke="#f00" stroke-width="2.2"/>
 <path d="M813.7 1057.2 L843 1051.9 L836 1077.7 Z" fill="#f00"/>
</svg>
</div>
<div id="preview">
<div class="panel" style="left:1262px;top:205px;width:318px;height:873px"><div class="ph"></div></div>
<div class="t" style="left:1270px;top:215px;font-size:13.9px;color:#333">Image Output Preview</div>
<svg class="a" style="left:1410px;top:212px" width="170" height="20" viewBox="1410 212 170 20">
 <circle cx="1418.8" cy="222" r="5" fill="none" stroke="#444" stroke-width="1"/>
 <path d="M1418.8 220.3 V225 M1418.8 218.5 V219.3" stroke="#444" stroke-width="1.1"/>
 <path d="M1504.8 220 L1508.7 223.9 L1512.6 220" fill="none" stroke="#8a8a8a" stroke-width="1.2"/>
 <g transform="translate(1533.8 222) rotate(45) scale(0.92)" fill="none" stroke="#8a8a8a" stroke-width="1.1" stroke-linejoin="round"><path d="M-2.3 -5.2 H2.3 V0.3 L3.9 2 H-3.9 L-2.3 0.3 Z"/><path d="M0 2 V6"/></g>
 <path d="M1556.8 217.8 L1564.8 225.8 M1564.8 217.8 L1556.8 225.8" stroke="#7a7a7a" stroke-width="1.15"/>
</svg>
<svg class="a" style="left:1270px;top:573px" width="302" height="170" viewBox="0 0 800 449" preserveAspectRatio="none"><use href="#wpp"/></svg>
</div>
<div id="props">
<div class="panel" style="left:1592px;top:205px;width:318px;height:873px"><div class="ph" style="height:32px"></div></div>
<div class="t" style="left:1600px;top:215px;font-size:13.8px;color:#333">Properties</div>
<svg class="a" style="left:1820px;top:210px" width="90" height="22" viewBox="1820 210 90 22">
 <path d="M1834.8 219.5 L1838.7 223.4 L1842.6 219.5" fill="none" stroke="#8a8a8a" stroke-width="1.2"/>
 <g transform="translate(1863.3 221.5) rotate(45) scale(0.92)" fill="none" stroke="#8a8a8a" stroke-width="1.1" stroke-linejoin="round"><path d="M-2.3 -5.2 H2.3 V0.3 L3.9 2 H-3.9 L-2.3 0.3 Z"/><path d="M0 2 V6"/></g>
 <path d="M1886.5 217.3 L1894.8 225.6 M1894.8 217.3 L1886.5 225.6" stroke="#7a7a7a" stroke-width="1.15"/>
</svg>
<div class="t" style="left:1605px;top:274px;font-size:13.8px;color:#1a1a1a">Frame</div>
<div class="a" style="left:1600px;top:293px;width:130px;height:2px;background:#0a6ed1"></div>
<div class="t" style="left:1605px;top:309.5px;font-size:12.6px;color:#1a1a1a">G8QK4J09SX</div>
<div class="t" style="left:1704px;top:311px;font-size:10.2px;color:#1f2fe0">Copy to Clipboard</div>
<div class="t" style="left:1605px;top:349px;font-size:13.5px;color:#666">Frame Title</div>
<div class="a" style="left:1608px;top:372px;width:254px;height:33px;background:#fff;border:1px solid #e6e6e6;border-bottom:1px solid #8a8a8a;border-radius:4px"></div>
<div class="t" style="left:1620px;top:383px;font-size:13.5px;color:#8a8a8a">Add Title</div>
<div class="t" style="left:1605px;top:426px;font-size:13.5px;color:#666">Frame Sub Title</div>
<div class="a" style="left:1608px;top:450px;width:254px;height:26px;background:#fff;border:1px solid #e6e6e6;border-bottom:none;border-radius:4px 4px 0 0"></div>
<div class="t" style="left:1605px;top:498px;font-size:13.7px;color:#666">Frame Description</div>
<div class="a" style="left:1605px;top:518px;width:260px;height:48px;background:#fff;border:1px solid #a9a9b0"></div>
<div class="t" style="left:1605px;top:585px;font-size:14px;color:#666">Numbering</div>
<div class="a" style="left:1609px;top:616px;width:20px;height:20px;border:1px solid #8a8a8a;border-radius:4px;background:#f3f3f3"></div>
<div class="t" style="left:1640px;top:612px;font-size:14px;color:#222">Restart Counter Numbering from this</div>
<div class="t" style="left:1640px;top:631px;font-size:14px;color:#222">Frame</div>
<div class="a" style="left:1609px;top:662px;width:20px;height:20px;border:1px solid #8a8a8a;border-radius:4px;background:#f3f3f3"></div>
<div class="t" style="left:1640px;top:666px;font-size:13.7px;color:#222">Show Text on Image in ServiceNow</div>
<div class="t" style="left:1605px;top:710px;font-size:13.7px;color:#666">Accessibility</div>
<svg class="a" style="left:1686px;top:700px" width="28" height="28" viewBox="1686 700 28 28"><path d="M1699.50 703.95 L1700.10 704.12 L1700.65 704.60 L1701.10 705.26 L1701.47 705.93 L1701.82 706.48 L1702.20 706.79 L1702.69 706.84 L1703.31 706.70 L1704.06 706.48 L1704.84 706.34 L1705.56 706.39 L1706.11 706.69 L1706.41 707.24 L1706.46 707.96 L1706.32 708.74 L1706.10 709.49 L1705.96 710.11 L1706.01 710.60 L1706.32 710.98 L1706.87 711.33 L1707.54 711.70 L1708.20 712.15 L1708.68 712.70 L1708.85 713.30 L1708.68 713.90 L1708.20 714.45 L1707.54 714.90 L1706.87 715.27 L1706.32 715.62 L1706.01 716.00 L1705.96 716.49 L1706.10 717.11 L1706.32 717.86 L1706.46 718.64 L1706.41 719.36 L1706.11 719.91 L1705.56 720.21 L1704.84 720.26 L1704.06 720.12 L1703.31 719.90 L1702.69 719.76 L1702.20 719.81 L1701.82 720.12 L1701.47 720.67 L1701.10 721.34 L1700.65 722.00 L1700.10 722.48 L1699.50 722.65 L1698.90 722.48 L1698.35 722.00 L1697.90 721.34 L1697.53 720.67 L1697.18 720.12 L1696.80 719.81 L1696.31 719.76 L1695.69 719.90 L1694.94 720.12 L1694.16 720.26 L1693.44 720.21 L1692.89 719.91 L1692.59 719.36 L1692.54 718.64 L1692.68 717.86 L1692.90 717.11 L1693.04 716.49 L1692.99 716.00 L1692.68 715.62 L1692.13 715.27 L1691.46 714.90 L1690.80 714.45 L1690.32 713.90 L1690.15 713.30 L1690.32 712.70 L1690.80 712.15 L1691.46 711.70 L1692.13 711.33 L1692.68 710.98 L1692.99 710.60 L1693.04 710.11 L1692.90 709.49 L1692.68 708.74 L1692.54 707.96 L1692.59 707.24 L1692.89 706.69 L1693.44 706.39 L1694.16 706.34 L1694.94 706.48 L1695.69 706.70 L1696.31 706.84 L1696.80 706.79 L1697.18 706.48 L1697.53 705.93 L1697.90 705.26 L1698.35 704.60 L1698.90 704.12Z" fill="none" stroke="#111" stroke-width="1.5" stroke-linejoin="round"/><circle cx="1699.5" cy="713.3" r="2.6" fill="none" stroke="#111" stroke-width="1.5"/></svg>
<div class="t" style="left:1620px;top:738px;font-size:12px;color:#111">Word Frame AltTitle</div>
<div class="a" style="left:1618px;top:759px;width:173px;height:32px;background:#f9f9f9;border:1px solid #e8e8e8;border-radius:4px"></div>
<div class="a" style="left:1803px;top:759px;width:78px;height:32px;background:#fff;border:1px solid #e3e3e3;border-bottom-color:#cfcfcf;border-radius:4px"></div>
<div class="t" style="left:1814px;top:772px;font-size:10px;color:#222">Use Override</div>
<div class="t" style="left:1620px;top:803px;font-size:12px;color:#111">Word Frame AltDescription</div>
<div class="a" style="left:1618px;top:824px;width:173px;height:32px;background:#f9f9f9;border:1px solid #e8e8e8;border-radius:4px"></div>
<div class="a" style="left:1803px;top:824px;width:78px;height:32px;background:#fff;border:1px solid #e3e3e3;border-bottom-color:#cfcfcf;border-radius:4px"></div>
<div class="t" style="left:1814px;top:837px;font-size:10px;color:#222">Use Override</div>
<div class="t" style="left:1620px;top:868.3px;font-size:11.7px;color:#111">HTML Frame AltText</div>
<div class="a" style="left:1618px;top:889px;width:173px;height:32px;background:#f9f9f9;border:1px solid #e8e8e8;border-radius:4px"></div>
<div class="a" style="left:1803px;top:889px;width:78px;height:32px;background:#fff;border:1px solid #e3e3e3;border-bottom-color:#cfcfcf;border-radius:4px"></div>
<div class="t" style="left:1814px;top:902px;font-size:10px;color:#222">Use Override</div>
<div class="a" style="left:1619px;top:1063px;width:228px;height:2px;background:#808080;border-radius:1px"></div>
</div>
</body></html>
